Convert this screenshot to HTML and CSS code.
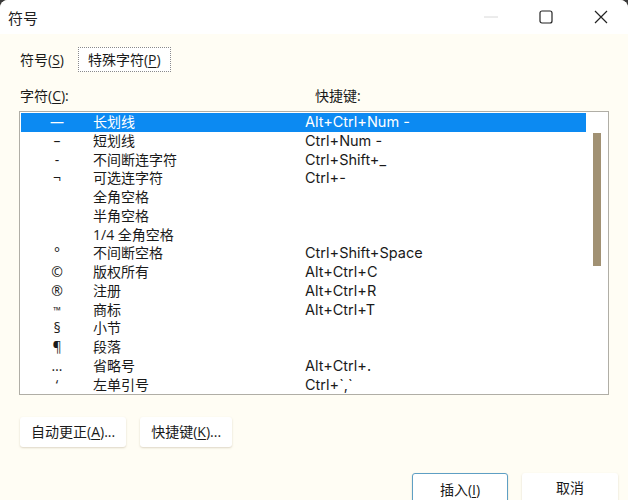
FILE: index.html
```html
<!doctype html>
<html>

<head>
  <meta charset="utf-8">
  <title>符号</title>
  <meta name="viewport" content="width=device-width, initial-scale=1">
  <link rel="stylesheet" href="styles.css">
</head>

<body>
  <div class="window">
    <div class="titlebar">
      <span class="title">符号</span>
      <div class="caption">
        <span class="cap cap_min"><svg width="14" height="14" viewBox="0 0 14 14"><path d="M0 7h14" stroke="#d8d8d8" stroke-width="1"/></svg></span>
        <span class="cap"><svg width="14" height="14" viewBox="0 0 14 14"><rect x="1" y="1" width="12" height="12" rx="2" fill="none" stroke="#222" stroke-width="1.2"/></svg></span>
        <span class="cap"><svg width="14" height="14" viewBox="0 0 14 14"><path d="M1 1L13 13M13 1L1 13" stroke="#222" stroke-width="1.2"/></svg></span>
      </div>
    </div>

    <div class="content">
      <div class="tabs">
        <span class="tab">符号(<u>S</u>)</span>
        <span class="tab tab_active">特殊字符(<u>P</u>)</span>
      </div>

      <div class="labels">
        <span class="label_char">字符(<u>C</u>):</span>
        <span class="label_key">快捷键:</span>
      </div>

      <div class="listbox">
        <div class="rows">
          <div class="row row_selected"><span class="ch">—</span><span class="nm">长划线</span><span class="key">Alt+Ctrl+Num -</span></div>
          <div class="row"><span class="ch">–</span><span class="nm">短划线</span><span class="key">Ctrl+Num -</span></div>
          <div class="row"><span class="ch">-</span><span class="nm">不间断连字符</span><span class="key">Ctrl+Shift+_</span></div>
          <div class="row"><span class="ch">¬</span><span class="nm">可选连字符</span><span class="key">Ctrl+-</span></div>
          <div class="row"><span class="ch"></span><span class="nm">全角空格</span><span class="key"></span></div>
          <div class="row"><span class="ch"></span><span class="nm">半角空格</span><span class="key"></span></div>
          <div class="row"><span class="ch"></span><span class="nm">1/4 全角空格</span><span class="key"></span></div>
          <div class="row"><span class="ch">°</span><span class="nm">不间断空格</span><span class="key">Ctrl+Shift+Space</span></div>
          <div class="row"><span class="ch">©</span><span class="nm">版权所有</span><span class="key">Alt+Ctrl+C</span></div>
          <div class="row"><span class="ch">®</span><span class="nm">注册</span><span class="key">Alt+Ctrl+R</span></div>
          <div class="row"><span class="ch ch_small">™</span><span class="nm">商标</span><span class="key">Alt+Ctrl+T</span></div>
          <div class="row"><span class="ch">§</span><span class="nm">小节</span><span class="key"></span></div>
          <div class="row"><span class="ch">¶</span><span class="nm">段落</span><span class="key"></span></div>
          <div class="row"><span class="ch">…</span><span class="nm">省略号</span><span class="key">Alt+Ctrl+.</span></div>
          <div class="row"><span class="ch">‘</span><span class="nm">左单引号</span><span class="key">Ctrl+`,`</span></div>
        </div>
        <div class="scroll">
          <div class="thumb"></div>
        </div>
      </div>

      <div class="actions">
        <span class="btn">自动更正(<u>A</u>)...</span>
        <span class="btn">快捷键(<u>K</u>)...</span>
      </div>

      <div class="footer">
        <span class="btn btn_wide btn_default">插入(<u>I</u>)</span>
        <span class="btn btn_wide">取消</span>
      </div>
    </div>
  </div>
</body>

</html>
```

FILE: styles.css
```css
* {
  margin: 0;
  box-sizing: border-box;
}

html,
body {
  width: 628px;
  height: 500px;
  overflow: hidden;
  background: #3a3a3a;
}

body {
  font-family: "Open Sans", "Noto Sans CJK SC", sans-serif;
  font-size: 14px;
  color: #1a1a1a;
}

u {
  text-decoration-thickness: 1px;
  text-underline-offset: 2px;
}

.window {
  width: 628px;
  height: 500px;
  background: #fffdf4;
  border-radius: 8px 8px 0 0;
  overflow: hidden;
}

.titlebar {
  height: 34px;
  background: #fff;
  display: flex;
  align-items: center;
  justify-content: space-between;
  padding-left: 8px;
}

.title {
  font-size: 15px;
  color: #222;
}

.caption {
  display: flex;
  height: 100%;
}

.cap {
  width: 55px;
  display: flex;
  align-items: center;
  justify-content: center;
}

.content {
  padding: 12px 10px 0 20px;
}

.tabs {
  display: flex;
  align-items: center;
  gap: 14px;
  height: 25px;
  margin-top: 1px;
}

.tab {
  line-height: 23px;
}

.tab_active {
  border: 1px dotted #8a8a8a;
  background: #fff;
  padding: 0 9px 0 9px;
  height: 25px;
}

.labels {
  display: flex;
  margin-top: 14px;
  height: 25px;
  line-height: 20px;
}

.label_char {
  width: 295px;
}

.listbox {
  width: 590px;
  height: 284px;
  border: 1px solid #b0aea6;
  background: #fff;
  display: flex;
  padding: 1px 0 0 1px;
  margin-left: -1px;
}

.rows {
  width: 565px;
}

.row {
  display: flex;
  align-items: center;
  height: 18.75px;
  line-height: 18.75px;
  white-space: nowrap;
}

.row_selected {
  background: #0c8af2;
  color: #fff;
}

.ch {
  width: 72px;
  text-align: center;
}

.ch_small {
  font-size: 10px;
}

.nm {
  width: 212px;
}

.key {
  font-family: Inter, "Noto Sans CJK SC", sans-serif;
  font-size: 14.5px;
}

.scroll {
  flex: 1;
  position: relative;
}

.thumb {
  position: absolute;
  left: 7px;
  top: 20px;
  width: 8px;
  height: 133px;
  background: #a19173;
}

.actions {
  display: flex;
  gap: 14px;
  margin-top: 22px;
}

.btn {
  display: inline-block;
  height: 30px;
  line-height: 30px;
  padding: 0 11px;
  background: #fff;
  border-radius: 3px;
  box-shadow: 0 1px 2px rgba(120, 100, 60, 0.25);
}

.footer {
  display: flex;
  justify-content: flex-end;
  gap: 14px;
  margin-top: 26px;
}

.btn_wide {
  width: 96px;
  height: 34px;
  text-align: center;
}

.btn_default {
  border: 1px solid #5e9fc4;
  line-height: 32px;
}
```
